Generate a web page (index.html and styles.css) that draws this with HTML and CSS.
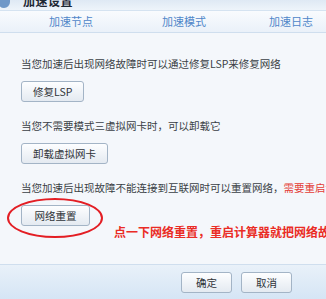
FILE: index.html
```html
<!DOCTYPE html>
<html lang="zh-CN">
<head>
<meta charset="utf-8">
<link rel="stylesheet" href="styles.css">
</head>
<body>
<div class="win">
  <div class="titlebar">
    <span class="logo"></span>
    <span class="title">加速设置</span>
  </div>
  <div class="tabs">
    <div class="tab t1">加速节点</div>
    <div class="tab t2">加速模式</div>
    <div class="tab t3">加速日志</div>
  </div>
  <div class="content">
    <p class="line">当您加速后出现网络故障时可以通过修复LSP来修复网络</p>
    <div class="row"><button class="btn">修复LSP</button></div>
    <p class="line l2">当您不需要模式三虚拟网卡时，可以卸载它</p>
    <div class="row"><button class="btn">卸载虚拟网卡</button></div>
    <p class="line l2">当您加速后出现故障不能连接到互联网时可以重置网络，<span class="warn">需要重启计算机</span></p>
    <div class="row">
      <div class="circled">
        <button class="btn">网络重置</button>
        <span class="ring"></span>
      </div>
      <span class="note">点一下网络重置，重启计算器就把网络故障修复了</span>
    </div>
  </div>
  <div class="footer">
    <button class="btn fbtn">确定</button>
    <button class="btn fbtn">取消</button>
  </div>
</div>
</body>
</html>
```
FILE: styles.css
```css
* { box-sizing: border-box; }
html, body {
  margin: 0;
  padding: 0;
  width: 326px;
  height: 299px;
  overflow: hidden;
  font-family: "Noto Sans CJK SC", "Noto Sans", sans-serif;
}
.win {
  width: 326px;
  height: 299px;
  display: flex;
  flex-direction: column;
  background: #f4f7fb;
}
.titlebar {
  height: 10px;
  overflow: hidden;
  display: flex;
  align-items: flex-end;
  background: linear-gradient(#dfe9f4, #eef4fa);
  position: relative;
}
.logo {
  width: 12px;
  height: 8px;
  margin-left: -2px;
  border-radius: 0 0 6px 6px;
  background: #6f98c8;
  margin-bottom: 2px;
}
.title {
  margin-left: 13px;
  font-size: 12px;
  font-weight: bold;
  color: #1d2733;
  line-height: 12px;
  margin-bottom: 3px;
  letter-spacing: 0.5px;
}
.tabs {
  height: 23px;
  display: grid;
  grid-template-columns: 114px 112px 102px;
  padding-left: 14px;
  background: linear-gradient(#f9fbfe, #eaf1f9);
  border-top: 1px solid #d5e3f1;
  border-bottom: 1px solid #cfdeee;
}
.tab {
  font-size: 11px;
  color: #4f86c9;
  display: flex;
  align-items: center;
  justify-content: center;
  line-height: 1;
}
.content {
  flex: 1;
  padding: 24px 0 0 21px;
  overflow: hidden;
  background: #f4f7fb;
}
.line {
  margin: 0;
  font-size: 10.5px;
  line-height: 14px;
  height: 14px;
  color: #3a3f45;
  white-space: nowrap;
}
.l2 { margin-top: 17px; }
.warn { color: #e43c35; }
.row {
  margin-top: 10px;
  display: flex;
  align-items: flex-start;
}
.btn {
  height: 21px;
  padding: 0 10px;
  font-family: "Noto Sans CJK SC", "Noto Sans", sans-serif;
  font-size: 10.5px;
  color: #2f3338;
  background: linear-gradient(#fdfeff, #e4eaf1);
  border: 1px solid #a3b4c6;
  border-radius: 3px;
  line-height: 19px;
  white-space: nowrap;
}
.row .btn { padding: 0 11px; }
.circled {
  position: relative;
  display: flex;
}
.circled .btn { width: 69px; }
.ring {
  position: absolute;
  left: -14px;
  top: -7px;
  width: 96px;
  height: 40px;
  border: 2.5px solid #e31e24;
  border-radius: 50%;
}
.note {
  margin-left: 24px;
  margin-top: 19px;
  font-size: 12px;
  font-weight: bold;
  line-height: 15px;
  color: #ea2c25;
  white-space: nowrap;
}
.footer {
  height: 35px;
  flex: none;
  display: flex;
  justify-content: flex-end;
  align-items: flex-start;
  gap: 9px;
  padding: 7px 34px 0 0;
  border-top: 1px solid #cfdeee;
  background: linear-gradient(#e9f1f9, #d5e5f5);
}
.fbtn {
  width: 51px;
  padding: 0;
  height: 21px;
}
```
